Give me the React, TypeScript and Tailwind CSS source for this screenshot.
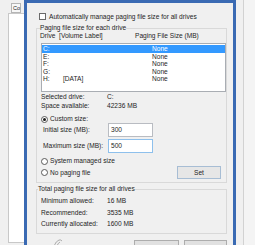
import React from 'react';

const drives = [
  { letter: 'C:', label: '', size: 'None', selected: true },
  { letter: 'E:', label: '', size: 'None' },
  { letter: 'F:', label: '', size: 'None' },
  { letter: 'G:', label: '', size: 'None' },
  { letter: 'H:', label: '[DATA]', size: 'None' },
];

const Radio = ({ checked }: { checked?: boolean }) => (
  <div className="w-[7px] h-[7px] rounded-full border border-[#5a5a5a] bg-white flex items-center justify-center shrink-0">
    {checked && <div className="w-[3px] h-[3px] rounded-full bg-[#1a1a1a]" />}
  </div>
);

const App: React.FC = () => {
  return (
    <div
      className="flex w-[255px] h-[245px] overflow-hidden bg-[#f0f0f0] text-[#1e1e1e] text-[6.6px] leading-[8px]"
      style={{ fontFamily: '"Liberation Sans", Arial, sans-serif' }}
    >
      {/* left window strip */}
      <div className="w-[24px] shrink-0 flex flex-col pl-[8px]">
        <div className="ml-[3px] mt-[3px] w-[10px] h-[10px] border border-[#b5b5b5] bg-[#f7f7f7] text-[5.5px] leading-[8px] pl-[1px]">Co</div>
        <div className="w-[16px] h-[230px] border-l border-t border-b border-[#c8c8c8] bg-white" />
      </div>

      {/* dialog */}
      <div className="w-[212px] shrink-0 border-t-[3px] border-l-[3px] border-r-[3px] border-[#3a6ab3] flex flex-col">
        <div className="flex items-center mt-[10px] ml-[12px] h-[7px] gap-[3px]">
          <div className="w-[7px] h-[7px] border border-[#6a6a6a] bg-white shrink-0" />
          <span>Automatically manage paging file size for all drives</span>
        </div>

        <fieldset className="mt-[4px] ml-[9px] w-[191px] border border-[#d9d9d9] pb-[3px]">
          <legend className="ml-[3px] leading-[8px]">Paging file size for each drive</legend>
          <div className="flex pl-[3px] h-[8px]">
            <span className="w-[95px]">Drive&nbsp; [Volume Label]</span>
            <span>Paging File Size (MB)</span>
          </div>
          <div className="mt-[3px] ml-[4px] w-[185px] h-[49px] border border-[#a9adb3] bg-white pt-[1px]">
            {drives.map((d) => (
              <div
                key={d.letter}
                className={`flex h-[7.6px] leading-[7.6px] pl-[1px] ${d.selected ? 'bg-[#3399ff] text-white' : ''}`}
              >
                <span className="w-[20px]">{d.letter}</span>
                <span className="w-[89px]">{d.label}</span>
                <span>{d.size}</span>
              </div>
            ))}
          </div>

          <div className="flex mt-[1px] pl-[4px] h-[8px]">
            <span className="w-[66px]">Selected drive:</span>
            <span>C:</span>
          </div>
          <div className="flex mt-[1px] pl-[4px] h-[8px]">
            <span className="w-[66px]">Space available:</span>
            <span>42236 MB</span>
          </div>

          <div className="flex items-center gap-[2px] mt-[5px] pl-[4px] h-[8px]">
            <Radio checked />
            <span>Custom size:</span>
          </div>
          <div className="flex items-center pl-[6px] h-[14px]">
            <span className="w-[65px]">Initial size (MB):</span>
            <div className="w-[45px] h-[14px] border border-[#b9bcc2] bg-white pl-[2px] leading-[12px]">300</div>
          </div>
          <div className="flex items-center mt-[2px] pl-[6px] h-[14px]">
            <span className="w-[65px]">Maximum size (MB):</span>
            <div className="w-[45px] h-[14px] border border-[#8ec0ec] bg-white pl-[2px] leading-[12px]">500</div>
          </div>

          <div className="flex items-center gap-[2px] mt-[4px] pl-[4px] h-[8px]">
            <Radio />
            <span>System managed size</span>
          </div>
          <div className="flex items-center mt-[1px] pl-[4px] pr-[5px] h-[13px]">
            <Radio />
            <span className="ml-[2px]">No paging file</span>
            <div className="ml-auto w-[44px] h-[13px] border border-[#a7bdd4] bg-[#e6e6e6] flex items-center justify-center">Set</div>
          </div>
        </fieldset>

        <fieldset className="mt-[2px] ml-[9px] w-[191px] border border-[#d9d9d9] pb-[5px]">
          <legend className="ml-[1px] leading-[8px]">Total paging file size for all drives</legend>
          <div className="flex mt-[4px] pl-[4px] h-[8px]">
            <span className="w-[66px]">Minimum allowed:</span>
            <span>16 MB</span>
          </div>
          <div className="flex mt-[4px] pl-[4px] h-[8px]">
            <span className="w-[66px]">Recommended:</span>
            <span>3535 MB</span>
          </div>
          <div className="flex mt-[3px] pl-[4px] h-[8px]">
            <span className="w-[66px]">Currently allocated:</span>
            <span>1600 MB</span>
          </div>
        </fieldset>

        <div className="flex items-start mt-[3px]">
          <svg className="ml-[26px] w-[10px] h-[10px]" viewBox="0 0 10 10" fill="none" stroke="#9a9a9a" strokeWidth="0.8">
            <path d="M1 9 Q3 4 6 3 Q8 2.5 9 4" />
            <path d="M4 9 Q5 6 7 5" />
          </svg>
          <div className="ml-[71px] mt-[3px] w-[45px] h-[12px] border border-[#adadad] bg-[#e1e1e1]" />
          <div className="ml-[5px] mt-[3px] w-[43px] h-[12px] border border-[#adadad] bg-[#e1e1e1]" />
        </div>
      </div>

      {/* right window strip */}
      <div className="flex-1 flex">
        <div className="ml-[7px] w-[1px] h-full bg-[#d2d2d2]" />
        <div className="flex-1 bg-[#f4f4f4]" />
      </div>
    </div>
  );
};

export default App;
